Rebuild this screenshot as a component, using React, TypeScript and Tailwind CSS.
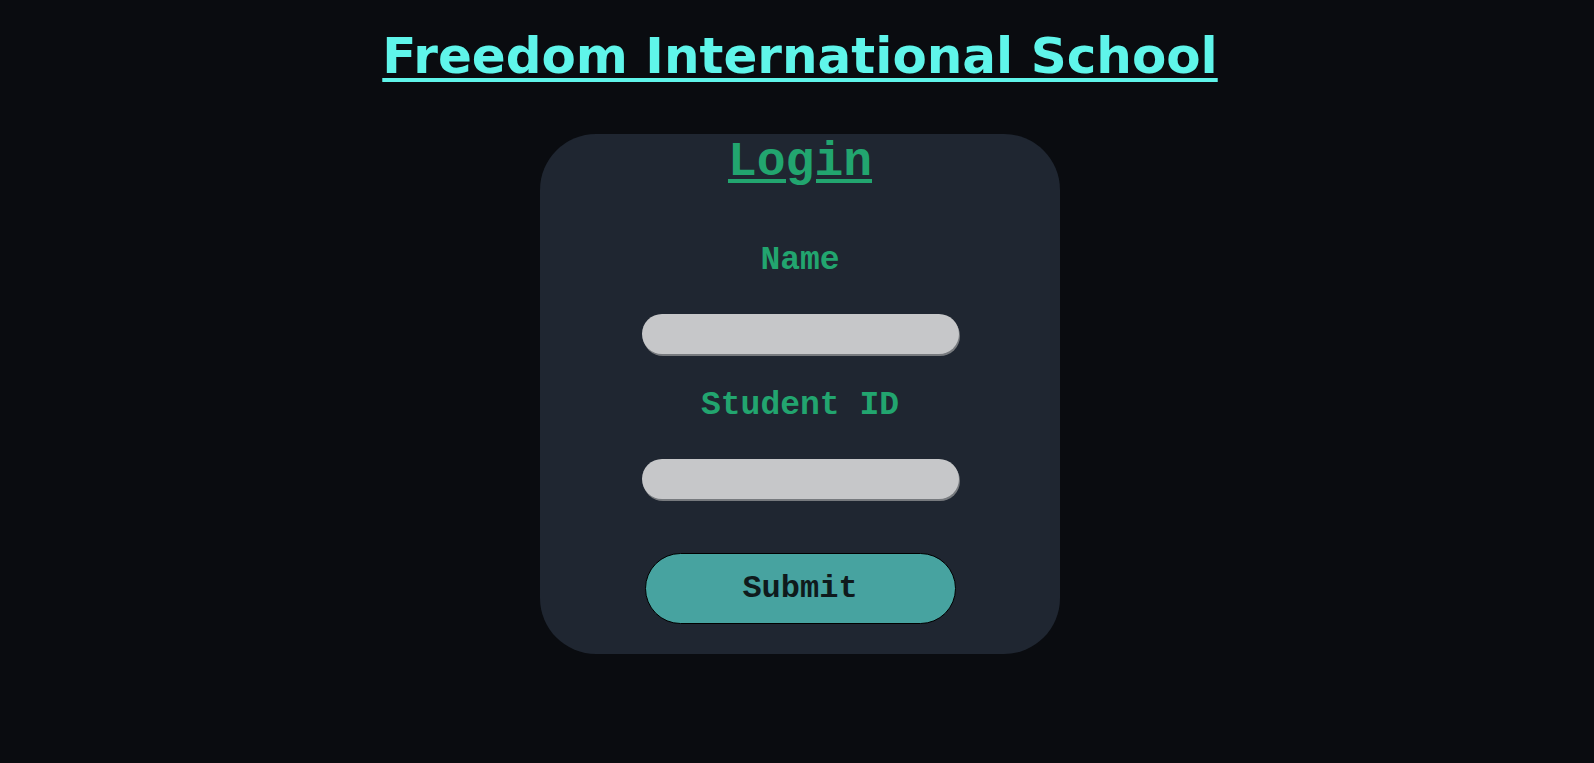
import React from 'react';

const mono = { fontFamily: '"Liberation Mono", "Courier New", monospace' };

export default function App() {
  return (
    <div className="min-h-[763px] w-full bg-[#0a0c10] flex flex-col items-center pl-[6px]">
      <h1
        className="mt-[28px] text-[50px] leading-[56px] font-bold text-[#5ff5ea] underline underline-offset-[5px] decoration-[4px]"
        style={{ fontFamily: '"DejaVu Sans", Verdana, sans-serif' }}
      >
        Freedom International School
      </h1>

      <form
        className="mt-[50px] w-[520px] rounded-[56px] bg-[#1f2631] pt-[4px] pb-[30px] flex flex-col items-center"
        style={mono}
        onSubmit={(e) => e.preventDefault()}
      >
        <h2 className="text-[48px] leading-[48px] font-bold text-[#22a56f] underline underline-offset-[4px] decoration-[4px]">
          Login
        </h2>

        <label className="mt-[59px] text-[33px] leading-[32px] font-bold text-[#22a56f]">Name</label>
        <input
          type="text"
          className="mt-[37px] w-[317px] h-[40px] rounded-full bg-[#c6c7c9] shadow-[1px_2px_0_#777a7e] outline-none px-4"
        />

        <label className="mt-[36px] text-[33px] leading-[32px] font-bold text-[#22a56f]">Student ID</label>
        <input
          type="text"
          className="mt-[37px] w-[317px] h-[40px] rounded-full bg-[#c6c7c9] shadow-[1px_2px_0_#777a7e] outline-none px-4"
        />

        <button
          type="submit"
          className="mt-[54px] w-[311px] h-[71px] rounded-full bg-[#47a3a0] border border-black text-[32px] font-bold text-[#0f1a1c]"
          style={mono}
        >
          Submit
        </button>
      </form>
    </div>
  );
}
